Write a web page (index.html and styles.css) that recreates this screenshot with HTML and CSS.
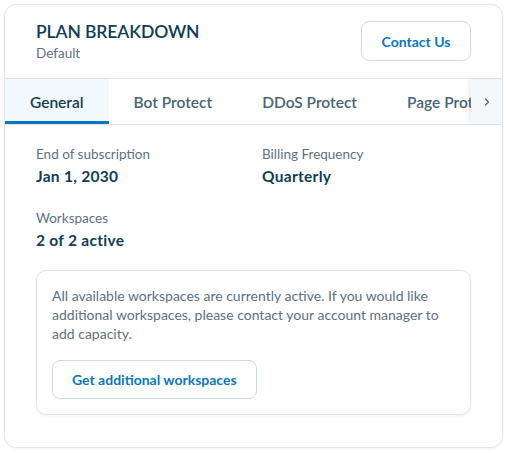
FILE: index.html
```html
<!DOCTYPE html>
<html lang="en">
<head>
    <meta charset="UTF-8">
    <meta name="viewport" content="width=device-width, initial-scale=1.0">
    <title>Plan Breakdown</title>
    <link rel="stylesheet" href="styles.css">
</head>
<body>
    <div class="card">
        <header class="card-header">
            <div>
                <h1 class="title">PLAN BREAKDOWN</h1>
                <p class="subtitle">Default</p>
            </div>
            <button class="btn btn-contact">Contact Us</button>
        </header>

        <nav class="tabs">
            <div class="tab-list">
                <a class="tab active">General</a>
                <a class="tab">Bot Protect</a>
                <a class="tab">DDoS Protect</a>
                <a class="tab">Page Protect</a>
            </div>
            <button class="tab-arrow" aria-label="Scroll tabs">
                <svg width="8" height="10" viewBox="0 0 8 10"><path d="M2.5 2 L5.5 5 L2.5 8" fill="none" stroke="#4a6477" stroke-width="1.3" stroke-linecap="round" stroke-linejoin="round"/></svg>
            </button>
        </nav>

        <main class="content">
            <div class="details">
                <div class="field">
                    <span class="label">End of subscription</span>
                    <span class="value">Jan 1, 2030</span>
                </div>
                <div class="field">
                    <span class="label">Billing Frequency</span>
                    <span class="value">Quarterly</span>
                </div>
                <div class="field">
                    <span class="label">Workspaces</span>
                    <span class="value">2 of 2 active</span>
                </div>
            </div>

            <div class="notice">
                <p>All available workspaces are currently active. If you would like additional workspaces, please contact your account manager to add capacity.</p>
                <button class="btn btn-workspaces">Get additional workspaces</button>
            </div>
        </main>
    </div>
</body>
</html>
```

FILE: styles.css
```css
:root {
    --text-dark: #0f3d56;
    --text-muted: #5d7082;
    --text-tab: #4a6477;
    --blue: #0a77bd;
    --border: #dfe6eb;
}

* {
    margin: 0;
    padding: 0;
    box-sizing: border-box;
}

body {
    font-family: "Lato", "Inter", sans-serif;
    background: #ffffff;
    color: var(--text-dark);
    padding: 4px;
    width: 507px;
}

.card {
    width: 499px;
    height: 444px;
    border: 1px solid var(--border);
    border-radius: 12px;
    background: #fff;
    box-shadow: 0 1px 3px rgba(0, 0, 0, 0.06);
    overflow: hidden;
}

.card-header {
    display: flex;
    justify-content: space-between;
    align-items: flex-start;
    padding: 16px 31px 0 31px;
    height: 73px;
}

.title {
    font-size: 17.5px;
    font-weight: 600;
    letter-spacing: -0.1px;
    line-height: 21px;
    color: var(--text-dark);
}

.subtitle {
    font-size: 13.5px;
    color: var(--text-muted);
    line-height: 18px;
    margin-top: 2px;
}

.btn {
    font-family: inherit;
    background: #fff;
    border: 1px solid #cfdbe3;
    border-radius: 8px;
    color: var(--blue);
    font-weight: 700;
    cursor: pointer;
}

.btn-contact {
    width: 110px;
    height: 40px;
    font-size: 14px;
}

.tabs {
    display: flex;
    border-top: 1px solid var(--border);
    border-bottom: 1px solid var(--border);
    height: 47px;
}

.tab-list {
    display: flex;
    flex: 1;
    overflow: hidden;
    white-space: nowrap;
}

.tab {
    display: flex;
    align-items: center;
    padding: 3px 25px 0 25px;
    font-size: 15.5px;
    font-weight: 600;
    color: var(--text-tab);
    border-bottom: 3px solid transparent;
    flex-shrink: 0;
}

.tab.active {
    background: #f3f8fc;
    color: var(--text-dark);
    border-bottom-color: var(--blue);
}

.tab-arrow {
    width: 31px;
    border: none;
    background: #f5f8fa;
    box-shadow: -3px 0 4px rgba(0, 0, 0, 0.06);
    display: flex;
    align-items: center;
    justify-content: center;
    position: relative;
}

.content {
    padding: 19px 31px 0 31px;
}

.details {
    display: grid;
    grid-template-columns: 226px 1fr;
    row-gap: 20px;
}

.field {
    display: flex;
    flex-direction: column;
}

.label {
    font-size: 13.5px;
    color: var(--text-muted);
    line-height: 20px;
}

.value {
    font-size: 15.5px;
    font-weight: 700;
    letter-spacing: 0.3px;
    color: var(--text-dark);
    line-height: 24px;
}

.notice {
    margin-top: 18px;
    border: 1px solid var(--border);
    border-radius: 10px;
    box-shadow: 0 1px 3px rgba(0, 0, 0, 0.06);
    padding: 15px 15px 15px 15px;
}

.notice p {
    font-size: 14px;
    line-height: 19px;
    color: var(--text-muted);
}

.btn-workspaces {
    margin-top: 17px;
    height: 39px;
    padding: 0 19px;
    font-size: 14px;
}
```
